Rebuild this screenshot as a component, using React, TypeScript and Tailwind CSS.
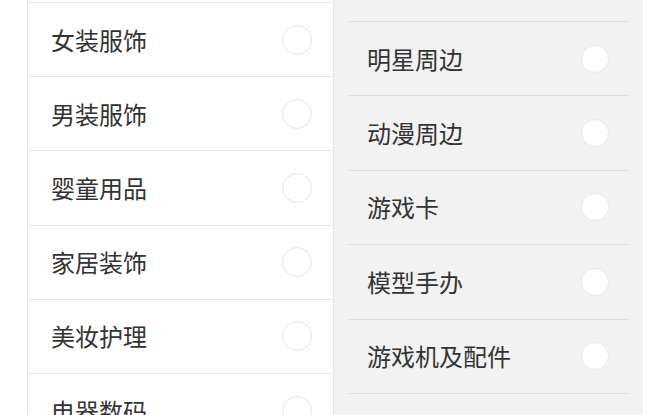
const left = ["女装服饰", "男装服饰", "婴童用品", "家居装饰", "美妆护理", "电器数码"];
const right = ["", "明星周边", "动漫周边", "游戏卡", "模型手办", "游戏机及配件", ""];

export default function App() {
  return (
    <div
      className="flex h-[415px] w-[670px] overflow-hidden bg-white text-[#333]"
      style={{ fontFamily: '"Noto Sans CJK SC", "Noto Sans", sans-serif' }}
    >
      <div className="ml-[27px] w-[307px] shrink-0 border-x border-[#e6e6e6] pt-[2px]">
        {left.map((name) => (
          <div
            key={name}
            className="flex h-[74.2px] items-center justify-between border-t border-[#e6e6e6] pl-[23px] pr-[21px]"
          >
            <span className="text-[24px] leading-none">{name}</span>
            <span className="h-[30px] w-[30px] rounded-full border border-[#e2e2e2] bg-white" />
          </div>
        ))}
      </div>
      <div className="w-[309px] shrink-0 bg-[#f2f2f2] px-[14px]">
        <div className="-mt-[52.4px]">
          {right.map((name, i) => (
            <div
              key={i}
              className="flex h-[74.4px] items-center justify-between border-b border-[#dedede] pl-[19px] pr-[20px]"
            >
              <span className="text-[24px] leading-none">{name}</span>
              <span className="h-[28px] w-[28px] rounded-full border border-[#e9e9e9] bg-white" />
            </div>
          ))}
        </div>
      </div>
    </div>
  );
}
